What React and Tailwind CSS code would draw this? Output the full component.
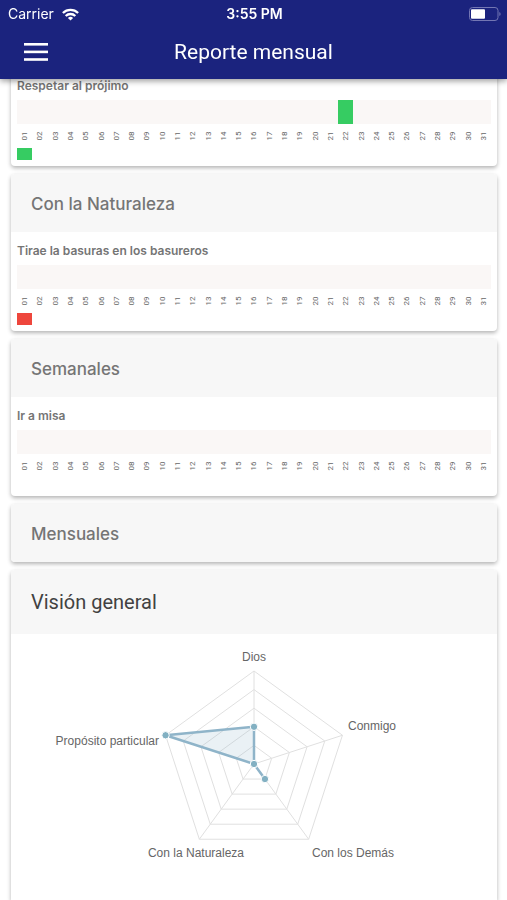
import { useMemo } from "react";

const DAYS = Array.from({ length: 31 }, (_, i) => String(i + 1).padStart(2, "0"));

const AXES = [
  { label: "Dios", value: 2, x: 200, y: 27, anchor: "middle" },
  { label: "Conmigo", value: 0, x: 294, y: 96, anchor: "start" },
  { label: "Con los Demás", value: 1, x: 258, y: 223, anchor: "start" },
  { label: "Con la Naturaleza", value: 0, x: 190, y: 223, anchor: "end" },
  { label: "Propósito particular", value: 5, x: 105, y: 111, anchor: "end" },
];

const MAX = 5;
const RADIUS = 93;
const CENTER = { x: 200, y: 130 };

// Position of a value on one of the chart's axes, the first axis points up
function pointAt(index, value) {
  const angle = (Math.PI * 2 * index) / AXES.length - Math.PI / 2;
  const r = (RADIUS * value) / MAX;
  return [CENTER.x + r * Math.cos(angle), CENTER.y + r * Math.sin(angle)];
}

function StatusBar() {
  return (
    <div className="grid h-7 grid-cols-3 items-center pr-1.5 pl-2 text-sm">
      <div className="flex items-center gap-2">
        <span>Carrier</span>
        <svg width="17" height="13" viewBox="0 0 17 13" fill="none" stroke="#fff" strokeWidth="2.3">
          <path d="M0.9 5a10.8 10.8 0 0 1 15.2 0" />
          <path d="M3.7 8a6.8 6.8 0 0 1 9.6 0" />
          <path d="M8.5 12.6 5.9 10a3.7 3.7 0 0 1 5.2 0z" fill="#fff" stroke="none" />
        </svg>
      </div>
      <span className="text-center font-semibold">3:55 PM</span>
      <svg
        className="justify-self-end"
        width="32"
        height="14"
        viewBox="0 0 32 14"
        fill="none"
      >
        <rect x="0.5" y="0.5" width="28.5" height="13" rx="3" stroke="#7376b3" />
        <rect x="2" y="2.2" width="14" height="9.6" rx="1" fill="#fff" />
        <path d="M30.500 5v4c1.3-.5 1.3-3.500 0-4z" fill="#8f92c4" />
      </svg>
    </div>
  );
}

function Header() {
  return (
    <header className="fixed inset-x-0 top-0 z-10 h-[79px] bg-[#1b237e] text-white shadow-[0_2px_6px_rgba(0,0,0,0.4)]">
      <StatusBar />
      <div className="grid grid-cols-[48px_1fr_48px] items-center px-3">
        <button type="button" aria-label="Menú" className="flex h-12 items-center justify-center">
          <svg width="24" height="18" viewBox="0 0 24 18" fill="#fff">
            <rect width="24" height="2.6" />
            <rect y="7.6" width="24" height="2.6" />
            <rect y="15.2" width="24" height="2.6" />
          </svg>
        </button>
        <h1 className="text-center font-[Roboto,sans-serif] text-[21px] leading-7">
          Reporte mensual
        </h1>
      </div>
    </header>
  );
}

function Card({ title, children }) {
  return (
    <section className="overflow-hidden rounded bg-white shadow-[0_2px_4px_rgba(0,0,0,0.3)]">
      {title && (
        <h2 className="bg-[#f7f7f7] px-5 pt-[17px] pb-[15px] text-[17px] leading-[26px] font-medium text-[#757575]">
          {title}
        </h2>
      )}
      {children}
    </section>
  );
}

function Habit({ name, marks = {}, legend }) {
  return (
    <div className="h-[99px] px-[6px] pt-[9px]">
      <h3 className="text-xs leading-5 font-semibold text-[#757575]">{name}</h3>
      <div className="mt-1 grid h-6 grid-cols-[repeat(31,minmax(0,1fr))] bg-[#faf7f6]">
        {DAYS.map((day) => (
          <div key={day} className={marks[day]} />
        ))}
      </div>
      <div className="grid h-6 grid-cols-[repeat(31,minmax(0,1fr))] items-center justify-items-center font-[Roboto,sans-serif] text-[8px] leading-none text-[#666]">
        {DAYS.map((day) => (
          <span key={day} className="-rotate-90">
            {day}
          </span>
        ))}
      </div>
      <div className="grid h-3 grid-cols-[repeat(31,minmax(0,1fr))]">
        <div className={legend} />
      </div>
    </div>
  );
}

function RadarChart() {
  const rings = useMemo(
    () =>
      [1, 2, 3, 4, 5].map((level) =>
        AXES.map((_, i) => pointAt(i, level).join(",")).join(" ")
      ),
    []
  );
  const points = AXES.map((axis, i) => pointAt(i, axis.value));

  return (
    <svg className="mx-auto w-full max-w-[400px]" viewBox="0 0 400 260">
      <g fill="none" stroke="#e0e0e0" strokeWidth="1">
        {rings.map((ring) => (
          <polygon key={ring} points={ring} />
        ))}
        {AXES.map((axis, i) => {
          const [x, y] = pointAt(i, MAX);
          return <line key={axis.label} x1={CENTER.x} y1={CENTER.y} x2={x} y2={y} />;
        })}
      </g>
      <polygon
        points={points.map((p) => p.join(",")).join(" ")}
        fill="#97bbcd"
        fillOpacity="0.2"
        stroke="#8fb4c9"
        strokeWidth="2.5"
        strokeLinejoin="round"
      />
      {points.map(([x, y], i) => (
        <circle key={i} cx={x} cy={y} r="3.7" fill="#82b0c2" stroke="#fff" strokeWidth="1" />
      ))}
      {AXES.map((axis) => (
        <text
          key={axis.label}
          x={axis.x}
          y={axis.y}
          textAnchor={axis.anchor}
          className="fill-[#666] font-['Liberation_Sans',Arial,sans-serif] text-[12px]"
        >
          {axis.label}
        </text>
      ))}
    </svg>
  );
}

export default function App() {
  return (
    <div className="flex min-h-screen flex-col bg-white font-[Inter,sans-serif]">
      <Header />
      <main className="flex flex-1 flex-col gap-2 pt-[67px] pr-[10px] pl-[11px]">
        <Card>
          <Habit
            name="Respetar al prójimo"
            marks={{ "22": "bg-[#36cc62]" }}
            legend="bg-[#36cc62]"
          />
        </Card>
        <Card title="Con la Naturaleza">
          <Habit name="Tirae la basuras en los basureros" legend="bg-[#ee463c]" />
        </Card>
        <Card title="Semanales">
          <Habit name="Ir a misa" />
        </Card>
        <Card title="Mensuales" />
        <section className="flex-1 overflow-hidden rounded-t bg-white shadow-[0_2px_4px_rgba(0,0,0,0.3)]">
          <h2 className="bg-[#f7f7f7] px-5 py-[18px] font-[Roboto,sans-serif] text-xl text-[#424242]">
            Visión general
          </h2>
          <RadarChart />
        </section>
      </main>
    </div>
  );
}
